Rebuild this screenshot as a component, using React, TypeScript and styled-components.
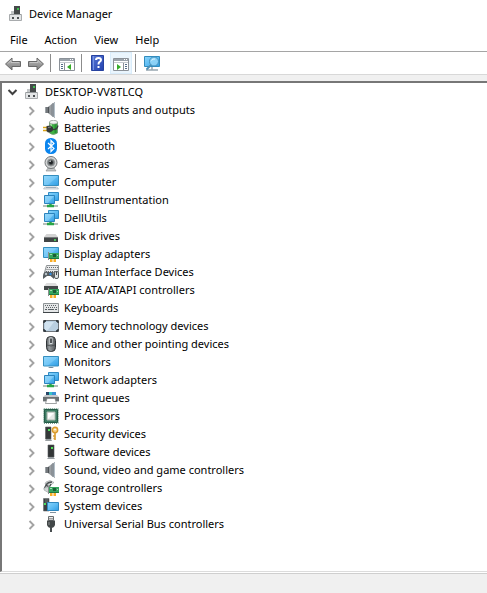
import React, { useState } from "react";
import styled, { createGlobalStyle } from "styled-components";

const GlobalStyle = createGlobalStyle`
  * { box-sizing: border-box; }
  body {
    margin: 0;
    background: #fff;
    color: #000;
    font-family: "Noto Sans", "Open Sans", sans-serif;
    font-size: 11px;
    line-height: 18px;
  }
`;

const Window = styled.div`
  display: flex;
  flex-direction: column;
  min-height: 100vh;
  background: #fff;
`;

const TitleBar = styled.header`
  display: flex;
  align-items: center;
  gap: 5px;
  height: 28px;
  padding-left: 8px;
`;

const Title = styled.h1`
  margin: 0;
  font-size: 11px;
  font-weight: 400;
`;

const MenuBar = styled.nav`
  display: flex;
  gap: 5px;
  height: 23px;
  padding-left: 4px;
`;

const MenuItem = styled.button`
  border: 0;
  background: none;
  padding: 0 6px;
  font: inherit;
  color: inherit;
  &:hover { background: #e5f3ff; }
`;

const ToolBar = styled.div`
  display: flex;
  align-items: center;
  gap: 1px;
  height: 24px;
  padding-left: 2px;
  border-top: 1px solid #a5a5a5;
  border-bottom: 1px solid #d8d8d8;
`;

const ToolButton = styled.button<{ $active?: boolean }>`
  display: flex;
  align-items: center;
  justify-content: center;
  width: 22px;
  height: 22px;
  padding: 0;
  border: 1px solid ${(p) => (p.$active ? "#d9ecfa" : "transparent")};
  background: ${(p) => (p.$active ? "#eaf5fd" : "none")};
  &:hover { background: #e5f3ff; }
`;

const Separator = styled.span`
  width: 1px;
  height: 18px;
  margin: 0 4px 0 2px;
  background: #8c8c8c;
`;

const Content = styled.main`
  display: flex;
  flex: 1;
  flex-direction: column;
  padding-top: 6px;
  background: #f0f0f0;
`;

const TreePane = styled.div`
  flex: 1;
  border-top: 2px solid #777;
  border-left: 2px solid #777;
  border-bottom: 1px solid #dcdcdc;
  background: #fff;
`;

const StatusBar = styled.footer`
  height: 20px;
  margin-top: 1px;
  border-top: 1px solid #cfcfcf;
  background: #f0f0f0;
  box-shadow: 0 -1px #fff;
`;

const Tree = styled.ul`
  list-style: none;
  margin: 0;
  padding: 0;
`;

const Row = styled.div<{ $level: number }>`
  display: flex;
  align-items: center;
  height: 18px;
  padding-left: ${(p) => 3 + p.$level * 19}px;
`;

const Expander = styled.button`
  display: flex;
  align-items: center;
  justify-content: center;
  width: 16px;
  height: 18px;
  margin-right: 3px;
  padding: 0;
  border: 0;
  background: none;
`;

const Label = styled.span`
  margin-left: 5px;
  white-space: nowrap;
`;

const Svg = styled.svg`
  display: block;
  flex: none;
`;

const HiddenDefs = styled.svg`
  position: absolute;
  width: 0;
  height: 0;
`;

function Gradients() {
  return (
    <HiddenDefs aria-hidden="true">
      <defs>
        <linearGradient id="screen" x1="0" y1="0" x2="1" y2="1">
          <stop offset="0" stopColor="#8ad4fb" />
          <stop offset="0.5" stopColor="#5fbdf3" />
          <stop offset="1" stopColor="#2e9ce4" />
        </linearGradient>
        <linearGradient id="metal" x1="0" y1="0" x2="1" y2="0">
          <stop offset="0" stopColor="#5d6165" />
          <stop offset="0.4" stopColor="#a3a8ac" />
          <stop offset="1" stopColor="#74797e" />
        </linearGradient>
        <linearGradient id="arrow" x1="0" y1="0" x2="0" y2="1">
          <stop offset="0" stopColor="#bcbcbc" />
          <stop offset="1" stopColor="#7d7d7d" />
        </linearGradient>
        <linearGradient id="book" x1="0" y1="0" x2="1" y2="1">
          <stop offset="0" stopColor="#5878d6" />
          <stop offset="1" stopColor="#2341ae" />
        </linearGradient>
        <linearGradient id="mouse" x1="0" y1="0" x2="1" y2="0">
          <stop offset="0" stopColor="#5a5e61" />
          <stop offset="0.3" stopColor="#9a9fa2" />
          <stop offset="1" stopColor="#54585b" />
        </linearGradient>
      </defs>
    </HiddenDefs>
  );
}

function Icon({ children }: { children: React.ReactNode }) {
  return (
    <Svg width="16" height="16" viewBox="0 0 16 16" fill="none" aria-hidden="true">
      {children}
    </Svg>
  );
}

const Card = () => (
  <>
    <path d="M5.500 6V14" stroke="#8a8f8f" />
    <path d="M6 7H16V13H6z" fill="#35a45d" />
    <path d="M6 12.500H16" stroke="#1f7a42" />
    <path d="M10 8H13V11H10z" fill="#1d5c37" />
    <path d="M7 8.500H9M14 9.500H15" stroke="#a2dcb2" />
    <path d="M7 13H9.500V16H7zM10.500 13H13V16H10.500z" fill="#f8ac26" />
  </>
);

const icons = {
  root: (
    <Icon>
      <path d="M6 0H12V9H6z" fill="#45494a" />
      <path d="M9 2H11V4H9z" fill="#3fc050" />
      <path d="M3 5H6V9H3z" fill="#c2c5c7" />
      <path d="M1.500 8.500H13.500V14.500H1.500z" fill="#e3e5e6" stroke="#a8abad" />
      <path d="M2 8.500H13" stroke="#95999b" />
      <path d="M4 11H6V13H4zM9 11H11V13H9z" fill="#4c5053" />
    </Icon>
  ),
  speaker: (
    <Icon>
      <path d="M2 5H6V11H2z" fill="#73787c" />
      <path d="M5 5L10 1V15L5 11z" fill="url(#metal)" />
      <path d="M2.500 5V11" stroke="#9da2a6" />
      <path d="M5.500 5V11" stroke="#4d5256" />
      <path d="M9 2L12 0V16L9 14z" fill="#8a9299" />
      <path d="M11.500 1V15" stroke="#b3bfc8" />
    </Icon>
  ),
  battery: (
    <Icon>
      <path d="M6.500 2V13Q10 16 14.500 13V2z" fill="#3fb443" stroke="#6d9670" strokeWidth=".8" />
      <path d="M12.500 4V13" stroke="#289034" strokeWidth="2" />
      <path d="M8 4V7" stroke="#b6f2ae" strokeWidth="1.500" />
      <ellipse cx="10.500" cy="2.200" rx="4" ry="1.900" fill="#f0f3f0" stroke="#8b938c" strokeWidth=".7" />
      <path d="M0 7.500H4M0 10.500H4" stroke="#d9a316" strokeWidth="1.300" />
      <path d="M3.500 6L7.500 5.500Q10.500 7 10.500 9.500Q9 12.500 5 12.500L3.500 11z" fill="#343838" />
      <path d="M5 7.500L8 7" stroke="#84898a" />
      <path d="M10 9.500Q14 10 15 5.500" stroke="#3a3e3e" strokeWidth="1.200" />
    </Icon>
  ),
  bluetooth: (
    <Icon>
      <rect x="2" y="0" width="12" height="16" rx="5.500" fill="#0b85ee" />
      <path d="M5 5L11 10.500L8 13.500V2.500L11 5.500L5 11" stroke="#fff" strokeWidth="1.200" />
    </Icon>
  ),
  camera: (
    <Icon>
      <path d="M5 12L3 15H13L11 12z" fill="#c3c6c7" stroke="#848889" strokeWidth=".6" />
      <circle cx="8" cy="6.500" r="6" fill="#d4d6d7" stroke="#74787a" />
      <circle cx="8" cy="6.500" r="3.600" fill="#6b7072" stroke="#919697" />
      <circle cx="8" cy="6.500" r="1.900" fill="#202427" />
      <path d="M6.500 5.500L8 5" stroke="#eef3f5" />
    </Icon>
  ),
  computer: (
    <Icon>
      <path d="M.5 1.500H15.500V11.500H.5z" fill="url(#screen)" stroke="#358ebe" />
      <path d="M1 2H15L5 11H1z" fill="#a9e2ff" opacity=".3" />
      <path d="M2 13H14L15.500 15H.5z" fill="#e3e8eb" stroke="#a2adb5" strokeWidth=".6" />
      <path d="M3 13.500H13" stroke="#859aaa" strokeWidth=".7" />
    </Icon>
  ),
  monitor: (
    <Icon>
      <path d="M.5 2.500H15.500V12H.5z" fill="url(#screen)" stroke="#358ebe" />
      <path d="M1 3H15L5 11.500H1z" fill="#a9e2ff" opacity=".3" />
      <path d="M5 14H11L9.500 13H6.500z" fill="#718898" />
    </Icon>
  ),
  network: (
    <Icon>
      <path d="M5.500 .5H15.500V8.500H5.500z" fill="url(#screen)" stroke="#318bc3" />
      <path d="M1.500 3.500H11.500V11.500H1.500z" fill="url(#screen)" stroke="#2b83bd" />
      <path d="M2 4H11L5 11H2z" fill="#b8e6ff" opacity=".35" />
      <path d="M0 14H15" stroke="#b5bfba" strokeWidth="2" />
      <path d="M4 14H11M7.500 12V14" stroke="#28a647" strokeWidth="2.500" />
    </Icon>
  ),
  disk: (
    <Icon>
      <path d="M3.500 6H12.500L15 9H1z" fill="#d3d3d3" />
      <path d="M1 9H15V14H1z" fill="#414546" />
      <path d="M1 9.500H15" stroke="#777b7c" />
      <path d="M11 12H13" stroke="#51ed65" strokeWidth="1.500" />
    </Icon>
  ),
  display: (
    <Icon>
      <path d="M.5 1.500H15.500V11.500H.5z" fill="url(#screen)" stroke="#358ebe" />
      <path d="M1 2H14L5 11H1z" fill="#a9e2ff" opacity=".3" />
      <Card />
    </Icon>
  ),
  hid: (
    <Icon>
      <path d="M3.500 1.500H15.500V8.500H1.500z" fill="#e9eaeb" stroke="#8e9395" />
      <path d="M4 3.500H15M3.500 5.500H15M3 7.500H15" stroke="#676c6f" strokeDasharray="1 1" />
      <path d="M0 15Q-.5 8 3 7.500L6 8H8L10 7.500Q11.500 11 11 15L7.500 12H4z" fill="#565d61" />
      <circle cx="3" cy="10" r="1.200" fill="#b8c3c8" />
      <circle cx="7.500" cy="10" r="1.200" fill="#328ce0" />
      <rect x="11.500" y="7.500" width="4" height="7" rx="1.500" fill="#dce0e2" stroke="#555b5e" />
      <path d="M13.500 8V11" stroke="#444a4d" />
    </Icon>
  ),
  ide: (
    <Icon>
      <path d="M3.500 1H12.500L15 4H1z" fill="#dedede" />
      <path d="M1 4H15V8H1z" fill="#444849" />
      <Card />
    </Icon>
  ),
  keyboard: (
    <Icon>
      <path d="M.5 3.500H15.500V12.500H.5z" fill="#e5e7e8" stroke="#8f9496" />
      <path d="M2 5.500H14M3 7.500H14" stroke="#5f6568" strokeDasharray="1 1" />
      <path d="M2 9.500H4M5 9.500H11M12 9.500H14" stroke="#596064" />
      <path d="M0 12.500H16" stroke="#3f4548" />
    </Icon>
  ),
  memory: (
    <Icon>
      <rect x=".5" y="2.500" width="15" height="11" rx="1" fill="#b9cfe0" stroke="#6d747a" />
      <path d="M2 4H11L5 12H2z" fill="#dcebf6" opacity=".7" />
      <path d="M1 5V3H3M13 3H15V5M1 11V13H3M13 13H15V11" stroke="#252b2f" strokeWidth="1.300" />
    </Icon>
  ),
  mouse: (
    <Icon>
      <rect x="3.500" y=".5" width="9" height="15" rx="4" fill="url(#mouse)" stroke="#303437" />
      <path d="M8 1.500V8" stroke="#d6dcdf" strokeWidth="3" />
      <path d="M8 2.500V7" stroke="#25292b" strokeWidth="1.500" />
      <path d="M4 9Q8 11 12 9" stroke="#3b3f41" strokeWidth=".7" />
    </Icon>
  ),
  printer: (
    <Icon>
      <path d="M3 2H13V6H3z" fill="#3b8fd4" />
      <path d="M3 2H6V5H3z" fill="#294869" />
      <path d="M6 2H9V5H6z" fill="#38c5c5" />
      <path d="M2 5H14L16 7V12H0V7z" fill="#c4c8ca" />
      <path d="M0 7H16V11H0z" fill="#6b7173" />
      <path d="M4 8.500H12L13.500 13.500H2.500z" fill="#fff" stroke="#777c7e" strokeWidth=".7" />
    </Icon>
  ),
  processor: (
    <Icon>
      <path d="M.8 .8H15.200V15.200H.8z" stroke="#3c7a61" strokeWidth="1" strokeDasharray="1 1" />
      <path d="M1.500 1.500H14.500V14.500H1.500z" fill="#3d7d63" stroke="#265b48" />
      <path d="M4 4H12V12H4z" fill="#e6e9e7" stroke="#acb8b1" />
      <path d="M5 5H11L5 11z" fill="#fff" />
    </Icon>
  ),
  security: (
    <Icon>
      <path d="M2.500 1H8V13H2.500z" fill="#343839" stroke="#5b5f60" strokeWidth=".6" />
      <path d="M5 3H7V5H5z" fill="#4ee159" />
      <path d="M2 15L3 13H8L9 15z" fill="#999fa2" />
      <circle cx="12" cy="4" r="2.700" fill="#f7d183" stroke="#d99a2d" strokeWidth="1.400" />
      <circle cx="12" cy="3.500" r=".8" fill="#fff" />
      <path d="M12 6.500V14M12 10H10M12 12.500H10.500" stroke="#dca036" strokeWidth="1.700" />
    </Icon>
  ),
  software: (
    <Icon>
      <path d="M5 1H11V13H5z" fill="#333637" stroke="#56595a" strokeWidth=".6" />
      <path d="M8 3H10V5H8z" fill="#51e358" />
      <path d="M4 15L5.500 13H10.500L12 15z" fill="#999fa2" />
    </Icon>
  ),
  storage: (
    <Icon>
      <path d="M3 2L7 .5L11 2.500L7 5.500L2 4z" fill="#e0e2e2" stroke="#919697" strokeWidth=".6" />
      <path d="M9 2Q5 2 3 5Q5 7 7 6L8 4M3 5L1.500 8L5 11" stroke="#4a5052" strokeWidth="1.300" />
      <path d="M1 8L5 7L8 10L6 13L1 10z" fill="#d1d5d5" stroke="#858c8e" strokeWidth=".5" />
      <Card />
    </Icon>
  ),
  system: (
    <Icon>
      <path d="M.5 .5H6V13H.5z" fill="#3b4042" stroke="#64696b" strokeWidth=".6" />
      <path d="M2 2H5M2 4H5" stroke="#889093" strokeWidth=".7" />
      <path d="M1 5H3V7H1z" fill="#4bdc60" />
      <path d="M4.500 4.500H15.500V12.500H4.500z" fill="url(#screen)" stroke="#2f87be" />
      <path d="M7 14.500H13" stroke="#82939f" />
    </Icon>
  ),
  usb: (
    <Icon>
      <path d="M5.500 .5H10.500V4.500H5.500z" fill="#ececec" stroke="#696d6f" />
      <path d="M7 2V3.500M9 2V3.500" stroke="#505456" />
      <path d="M4 4.500H12V9Q11 12 8 12Q5 12 4 9z" fill="#424748" />
      <path d="M6 6V9" stroke="#8c9192" />
      <path d="M8 11V16" stroke="#484d4f" strokeWidth="2" />
    </Icon>
  ),
};

function Chevron({ open }: { open?: boolean }) {
  return (
    <Svg width="12" height="12" viewBox="0 0 12 12" fill="none" aria-hidden="true">
      {open ? (
        <path d="M1.500 4L5.500 8L9.500 4" stroke="#404040" strokeWidth="2" />
      ) : (
        <path d="M3.500 3L7.500 7L3.500 11" stroke="#a3a3a3" strokeWidth="1.900" />
      )}
    </Svg>
  );
}

function Arrow({ forward }: { forward?: boolean }) {
  return (
    <Svg width="18" height="16" viewBox="0 0 18 16" aria-hidden="true">
      <path
        d={forward ? "M16.500 9L10 3V6.500H1.500V11.500H10V15z" : "M1.500 9L8 3V6.500H16.500V11.500H8V15z"}
        fill="url(#arrow)"
        stroke="#696969"
        strokeLinejoin="round"
      />
      <path d={forward ? "M3 7.500H11V5.500L14 8.500" : "M15 7.500H7V5.500L4 8.500"} fill="none" stroke="#cdcdcd" strokeWidth=".8" />
    </Svg>
  );
}

function PaneIcon({ right }: { right?: boolean }) {
  return (
    <Icon>
      <path d="M.5 3.500H15.500V15.500H.5z" fill="#fff" stroke="#8b9198" />
      <path d="M1 4H15V6H1z" fill="#9ba3ab" />
      <path d="M11 4H12V5H11zM13 4H14V5H13z" fill="#fff" />
      <path d="M1 7.500H15" stroke="#c5cad0" />
      {right ? (
        <>
          <path d="M10.500 8V15" stroke="#8b9198" />
          <path d="M12 9.500H14M12 11.500H14M12 13.500H14" stroke="#536c88" />
          <path d="M4 9L8 12L4 15z" fill="#35ac28" />
        </>
      ) : (
        <>
          <path d="M5.500 8V15" stroke="#8b9198" />
          <path d="M2 9.500H4M2 11.500H4M2 13.500H4" stroke="#536c88" />
          <path d="M12 9L8 12L12 15z" fill="#35ac28" />
        </>
      )}
    </Icon>
  );
}

function HelpIcon() {
  return (
    <Icon>
      <path d="M1.500 .5H13.500V15.500H1.500z" fill="url(#book)" stroke="#27429f" />
      <path d="M3.500 1V15" stroke="#7593e3" />
      <path d="M6 5Q6 3 8.500 3Q11 3 11 5Q11 6 9.500 7Q8.500 7.500 8.500 9.500" stroke="#fff" strokeWidth="2" />
      <path d="M7.500 11H9.500V13H7.500z" fill="#fff" />
    </Icon>
  );
}

function ScanIcon() {
  return (
    <Icon>
      <path d="M.5 1.500H15.500V11.500H.5z" fill="url(#screen)" stroke="#318cbd" />
      <path d="M2 15H14M8 12V15" stroke="#98a7b0" strokeWidth="1.500" />
      <path d="M7.500 9.500L2.500 14.500" stroke="#4c8fb5" strokeWidth="1.800" />
      <circle cx="10" cy="6.500" r="4.500" fill="#9ad8f7" fillOpacity=".8" stroke="#4291bd" />
      <path d="M7.500 5.500Q9 3.500 11 4" stroke="#e2f5fd" />
    </Icon>
  );
}

type IconName = keyof typeof icons;

const devices: { label: string; icon: IconName }[] = [
  { label: "Audio inputs and outputs", icon: "speaker" },
  { label: "Batteries", icon: "battery" },
  { label: "Bluetooth", icon: "bluetooth" },
  { label: "Cameras", icon: "camera" },
  { label: "Computer", icon: "computer" },
  { label: "DellInstrumentation", icon: "network" },
  { label: "DellUtils", icon: "network" },
  { label: "Disk drives", icon: "disk" },
  { label: "Display adapters", icon: "display" },
  { label: "Human Interface Devices", icon: "hid" },
  { label: "IDE ATA/ATAPI controllers", icon: "ide" },
  { label: "Keyboards", icon: "keyboard" },
  { label: "Memory technology devices", icon: "memory" },
  { label: "Mice and other pointing devices", icon: "mouse" },
  { label: "Monitors", icon: "monitor" },
  { label: "Network adapters", icon: "network" },
  { label: "Print queues", icon: "printer" },
  { label: "Processors", icon: "processor" },
  { label: "Security devices", icon: "security" },
  { label: "Software devices", icon: "software" },
  { label: "Sound, video and game controllers", icon: "speaker" },
  { label: "Storage controllers", icon: "storage" },
  { label: "System devices", icon: "system" },
  { label: "Universal Serial Bus controllers", icon: "usb" },
];

export default function App() {
  const [open, setOpen] = useState(true);
  return (
    <Window>
      <GlobalStyle />
      <Gradients />
      <TitleBar>
        {icons.root}
        <Title>Device Manager</Title>
      </TitleBar>
      <MenuBar aria-label="Menu">
        {["File", "Action", "View", "Help"].map((name) => (
          <MenuItem key={name} type="button">{name}</MenuItem>
        ))}
      </MenuBar>
      <ToolBar role="toolbar" aria-label="Tools">
        <ToolButton type="button" aria-label="Back"><Arrow /></ToolButton>
        <ToolButton type="button" aria-label="Forward"><Arrow forward /></ToolButton>
        <Separator />
        <ToolButton type="button" aria-label="Show or hide console tree"><PaneIcon /></ToolButton>
        <Separator />
        <ToolButton type="button" aria-label="Help"><HelpIcon /></ToolButton>
        <ToolButton type="button" aria-label="Show or hide action pane" $active><PaneIcon right /></ToolButton>
        <Separator />
        <ToolButton type="button" aria-label="Scan for hardware changes"><ScanIcon /></ToolButton>
      </ToolBar>
      <Content>
        <TreePane>
          <Tree role="tree" aria-label="Devices">
            <li role="treeitem" aria-expanded={open}>
              <Row $level={0}>
                <Expander type="button" aria-label="Toggle DESKTOP-VV8TLCQ" onClick={() => setOpen(!open)}>
                  <Chevron open={open} />
                </Expander>
                {icons.root}
                <Label>DESKTOP-VV8TLCQ</Label>
              </Row>
              {open && (
                <Tree role="group">
                  {devices.map((device) => (
                    <li key={device.label} role="treeitem" aria-expanded={false}>
                      <Row $level={1}>
                        <Expander type="button" aria-label={`Expand ${device.label}`}>
                          <Chevron />
                        </Expander>
                        {icons[device.icon]}
                        <Label>{device.label}</Label>
                      </Row>
                    </li>
                  ))}
                </Tree>
              )}
            </li>
          </Tree>
        </TreePane>
      </Content>
      <StatusBar />
    </Window>
  );
}
